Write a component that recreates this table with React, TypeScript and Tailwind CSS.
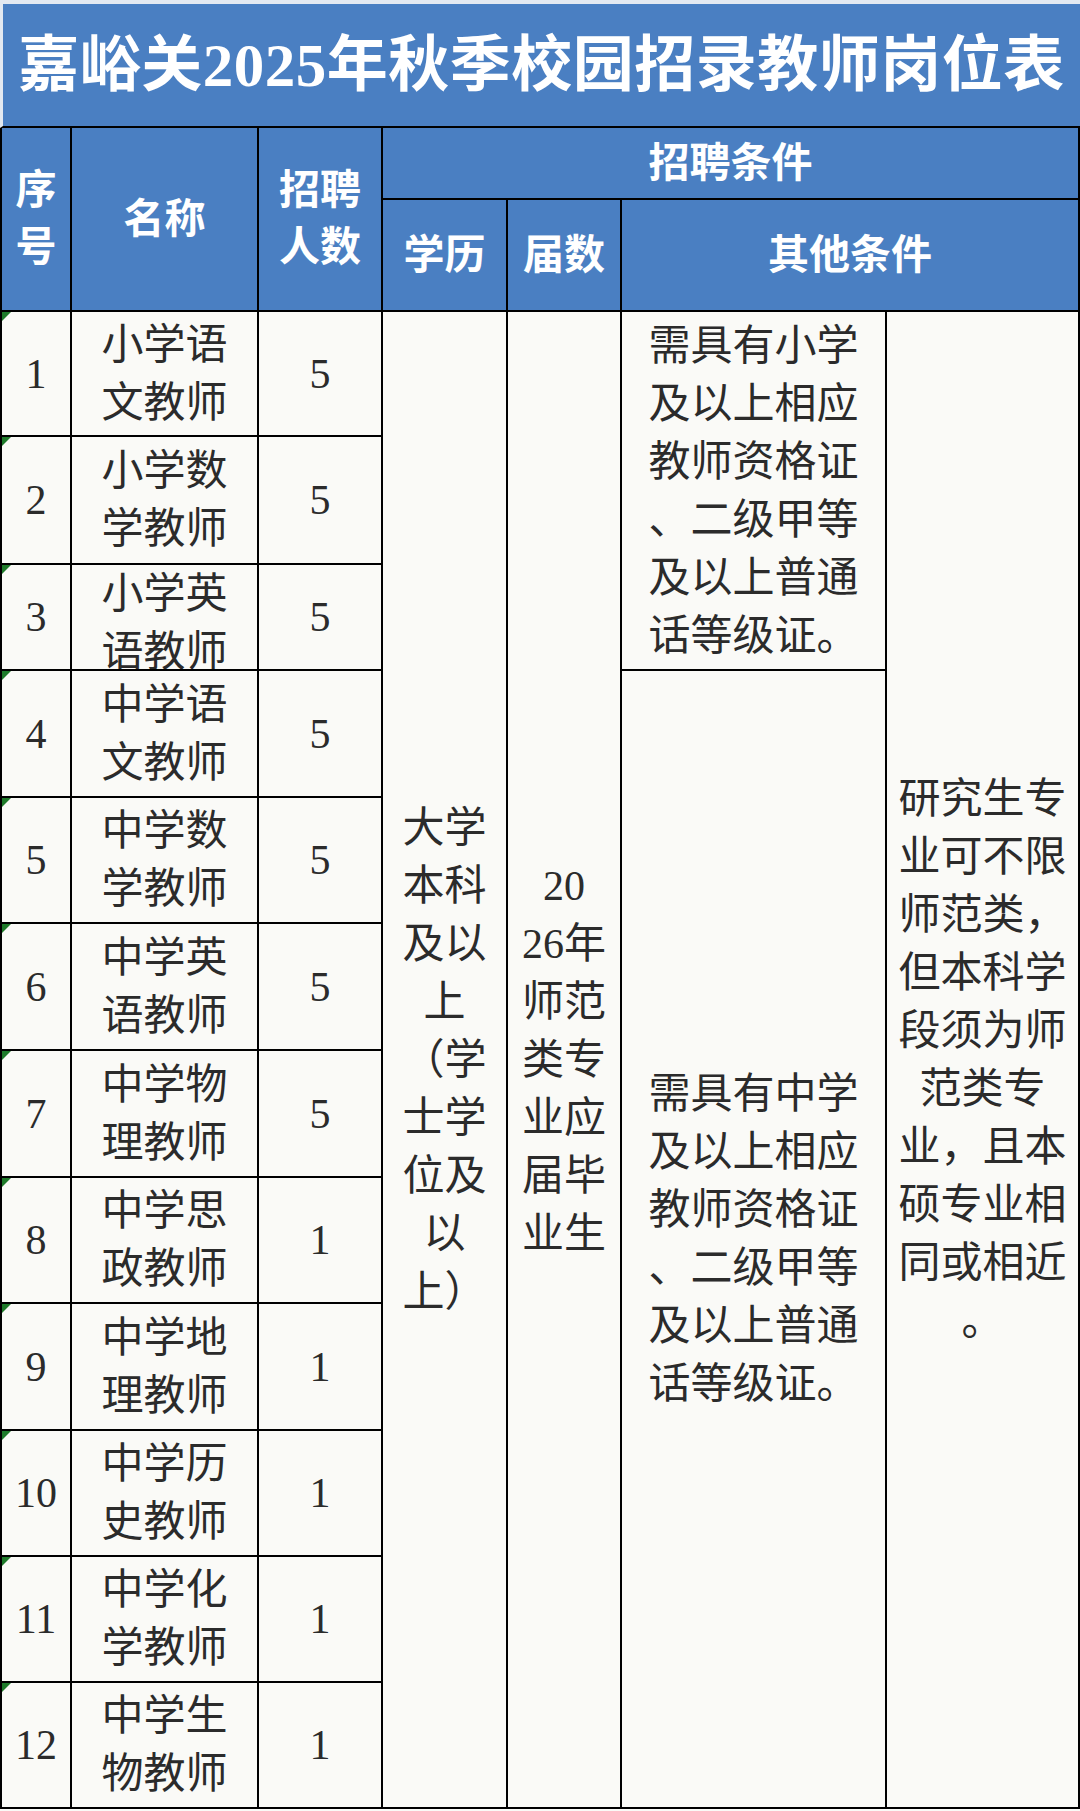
import React from "react"

const rows = [
  { no: "1", name: ["小学语", "文教师"], count: "5" },
  { no: "2", name: ["小学数", "学教师"], count: "5" },
  { no: "3", name: ["小学英", "语教师"], count: "5", clip: true },
  { no: "4", name: ["中学语", "文教师"], count: "5" },
  { no: "5", name: ["中学数", "学教师"], count: "5" },
  { no: "6", name: ["中学英", "语教师"], count: "5" },
  { no: "7", name: ["中学物", "理教师"], count: "5" },
  { no: "8", name: ["中学思", "政教师"], count: "1" },
  { no: "9", name: ["中学地", "理教师"], count: "1" },
  { no: "10", name: ["中学历", "史教师"], count: "1" },
  { no: "11", name: ["中学化", "学教师"], count: "1" },
  { no: "12", name: ["中学生", "物教师"], count: "1" },
]

const font = { fontFamily: '"Liberation Serif", "Noto Sans CJK SC", serif' }

function Lines({ lines }: { lines: string[] }) {
  return (
    <div className="text-center">
      {lines.map((l, i) => (
        <div key={i} className="whitespace-nowrap">
          {l}
        </div>
      ))}
    </div>
  )
}

const head = "flex items-center justify-center bg-[#4a7fc2] text-white font-bold border-r-2 border-b-2 border-black text-[41px] leading-[57px]"
const body = "flex items-center justify-center bg-[#fafaf7] border-r-2 border-b-2 border-black"

export default function App() {
  return (
    <div className="w-[1080px] h-[1811px] bg-[#fafaf7] text-[#2b2b2b]" style={font}>
      {/* title */}
      <div className="h-[128px] bg-[#4a7fc2] border-t-4 border-t-[#e3e9f1] border-l-[3px] border-l-[#e3e9f1] border-b-2 border-b-black flex items-center justify-center">
        <h1 className="text-[61px] font-bold text-white leading-none tracking-[0.5px]">嘉峪关2025年秋季校园招录教师岗位表</h1>
      </div>

      <div className="grid grid-cols-[72px_187px_124px_125px_114px_265px_193px] grid-rows-[72px_112px_125px_128px_106px_127px_126px_127px_127px_126px_127px_126px_126px_126px] text-[42px] leading-[58px]">
        {/* header */}
        <div className={`${head} col-[1/2] row-[1/3] border-l-2`}>
          <Lines lines={["序", "号"]} />
        </div>
        <div className={`${head} col-[2/3] row-[1/3]`}>名称</div>
        <div className={`${head} col-[3/4] row-[1/3]`}>
          <Lines lines={["招聘", "人数"]} />
        </div>
        <div className={`${head} col-[4/8] row-[1/2]`}>招聘条件</div>
        <div className={`${head} col-[4/5] row-[2/3]`}>学历</div>
        <div className={`${head} col-[5/6] row-[2/3]`}>届数</div>
        <div className={`${head} col-[6/8] row-[2/3]`}>其他条件</div>

        {/* merged columns */}
        <div className={`${body} col-[4/5] row-[3/15]`}>
          <Lines lines={["大学", "本科", "及以", "上", "（学", "士学", "位及", "以", "上）"]} />
        </div>
        <div className={`${body} col-[5/6] row-[3/15]`}>
          <Lines lines={["20", "26年", "师范", "类专", "业应", "届毕", "业生"]} />
        </div>
        <div className={`${body} col-[6/7] row-[3/6]`}>
          <Lines lines={["需具有小学", "及以上相应", "教师资格证", "、二级甲等", "及以上普通", "话等级证。"]} />
        </div>
        <div className={`${body} col-[6/7] row-[6/15]`}>
          <Lines lines={["需具有中学", "及以上相应", "教师资格证", "、二级甲等", "及以上普通", "话等级证。"]} />
        </div>
        <div className={`${body} col-[7/8] row-[3/15]`}>
          <Lines lines={["研究生专", "业可不限", "师范类，", "但本科学", "段须为师", "范类专", "业，且本", "硕专业相", "同或相近", "。"]} />
        </div>

        {/* rows */}
        {rows.map((r) => (
          <React.Fragment key={r.no}>
            <div className={`${body} relative border-l-2`}>
              <span className="absolute left-0 top-0 w-0 h-0 border-t-[9px] border-t-[#1e7a2a] border-r-[9px] border-r-transparent" />
              {r.no}
            </div>
            <div className={`${body} overflow-hidden ${r.clip ? "items-start" : ""}`}>
              <Lines lines={r.name} />
            </div>
            <div className={body}>{r.count}</div>
          </React.Fragment>
        ))}
      </div>
    </div>
  )
}
